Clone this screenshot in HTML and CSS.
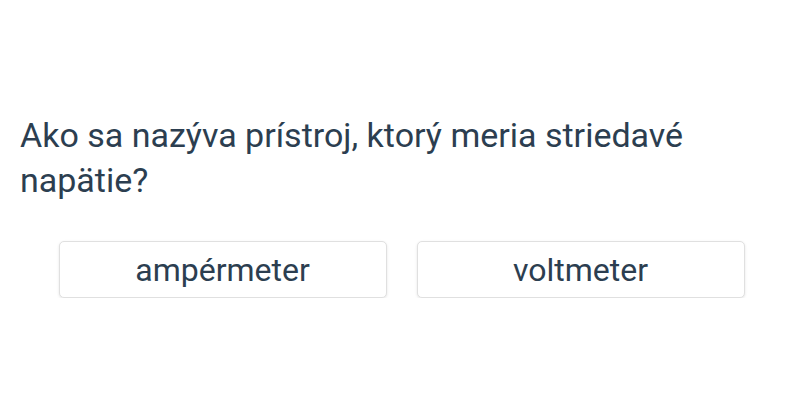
FILE: index.html
```html
<!DOCTYPE html>
<html lang="sk">
<head>
    <meta charset="UTF-8">
    <meta name="viewport" content="width=device-width, initial-scale=1.0">
    <title>Kvíz</title>
    <link rel="stylesheet" href="styles.css">
</head>
<body>
    <div class="quiz">
        <h1 class="question">Ako sa nazýva prístroj, ktorý meria striedavé napätie?</h1>
        <div class="answers">
            <button class="answer">ampérmeter</button>
            <button class="answer">voltmeter</button>
        </div>
    </div>
</body>
</html>
```

FILE: styles.css
```css
body {
    margin: 0;
    background: #fff;
    font-family: Roboto, 'Liberation Sans', sans-serif;
    color: #2c3e50;
}
.quiz {
    padding: 113px 20px 0;
}
.question {
    margin: 0 0 38px;
    max-width: 720px;
    font-size: 34px;
    font-weight: 400;
    line-height: 45px;
}
.answers {
    display: flex;
    justify-content: center;
    gap: 30px;
    padding-left: 3px;
}
.answer {
    width: 328px;
    height: 57px;
    background: #fff;
    border: 1px solid #e0e0e0;
    border-radius: 5px;
    box-shadow: 0 1px 3px rgba(0,0,0,0.1);
    font-family: inherit;
    font-size: 32px;
    color: #2c3e50;
    cursor: pointer;
}
```
